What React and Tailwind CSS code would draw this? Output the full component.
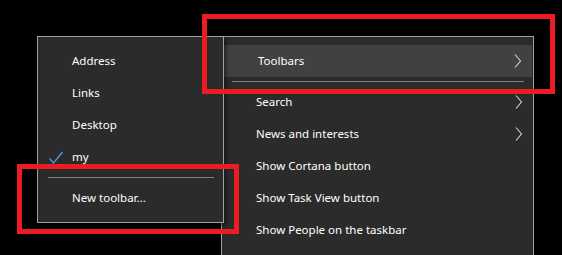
import React from "react";

const mainItems = [
  { label: "Toolbars", sub: true, active: true, sepAfter: true },
  { label: "Search", sub: true },
  { label: "News and interests", sub: true },
  { label: "Show Cortana button" },
  { label: "Show Task View button" },
  { label: "Show People on the taskbar" },
];

const toolbarItems = [
  { label: "Address" },
  { label: "Links" },
  { label: "Desktop" },
  { label: "my", checked: true, sepAfter: true },
  { label: "New toolbar..." },
];

const Chevron = () => (
  <svg width="8" height="14" viewBox="0 0 8 14" className="shrink-0">
    <path d="M1 0.5 L6.5 7 L1 13.5" fill="none" stroke="#d6d6d6" strokeWidth="1.1" />
  </svg>
);

const Check = () => (
  <svg width="15" height="15" viewBox="0 0 15 15" className="absolute left-[11px] top-[9px]">
    <path d="M0.5 8.5 L4.5 13 L13.5 2" fill="none" stroke="#4c9de0" strokeWidth="1.3" />
  </svg>
);

const Separator = () => (
  <div className="h-[9px] flex items-center pl-[10px] pr-[9px]">
    <div className="h-px w-full bg-[#808080]" />
  </div>
);

const MenuRow = ({ item }) => (
  <>
    <div
      className={`relative h-8 flex items-center pl-[34px] pr-[10px] ${
        item.active ? "bg-[#414141] ml-[2px] mr-[1px] pl-[32px]" : ""
      }`}
    >
      {item.checked && <Check />}
      <span className="flex-1 whitespace-nowrap">{item.label}</span>
      {item.sub && <Chevron />}
    </div>
    {item.sepAfter && <Separator />}
  </>
);

export default function App() {
  return (
    <div
      className="relative w-[562px] h-[255px] bg-black overflow-hidden text-[11.5px] text-white"
      style={{ fontFamily: '"Noto Sans", "Segoe UI", sans-serif' }}
    >
      {/* taskbar context menu */}
      <div className="absolute left-[221px] top-[36px] w-[313px] h-[240px] bg-[#2b2b2b] border border-[#a0a0a0] pt-2">
        {mainItems.map((item) => (
          <MenuRow key={item.label} item={item} />
        ))}
      </div>

      {/* toolbars submenu */}
      <div className="absolute left-[37px] top-[36px] w-[187px] h-[187px] bg-[#2b2b2b] border border-[#a0a0a0] pt-2 shadow-[2px_2px_4px_rgba(0,0,0,0.5)]">
        {toolbarItems.map((item) => (
          <MenuRow key={item.label} item={item} />
        ))}
      </div>

      {/* annotation boxes */}
      <div className="absolute left-[202px] top-[14px] w-[353px] h-[80px] border-[5px] border-[#ed1c24]" />
      <div className="absolute left-[17px] top-[164px] w-[222px] h-[70px] border-[5px] border-[#ed1c24]" />
    </div>
  );
}
